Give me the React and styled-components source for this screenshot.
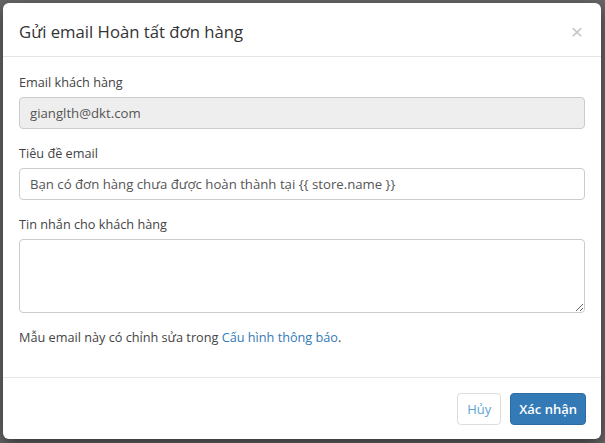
import React from "react";
import styled, { createGlobalStyle } from "styled-components";

const Global = createGlobalStyle`
  html, body { margin: 0; padding: 0; }
  body {
    background: #666;
    font-family: "Open Sans", "Liberation Sans", sans-serif;
    color: #333;
  }
  * { box-sizing: border-box; }
`;

const Backdrop = styled.div`
  width: 605px;
  height: 443px;
  padding: 3px 4px 4px 3px;
  background: #676767;
`;

const Modal = styled.div`
  width: 598px;
  height: 436px;
  background: #fff;
  border-radius: 6px;
  box-shadow: 0 5px 15px rgba(0, 0, 0, 0.5);
  display: flex;
  flex-direction: column;
`;

const Header = styled.div`
  display: flex;
  align-items: center;
  justify-content: space-between;
  height: 55px;
  padding: 3px 15px 0 16px;
  border-bottom: 1px solid #e5e5e5;
`;

const Title = styled.h4`
  margin: 0;
  font-size: 16.7px;
  font-weight: 500;
  color: #333;
`;

const Close = styled.button`
  border: 0;
  background: transparent;
  padding: 0;
  margin-right: 3px;
  font-size: 21px;
  line-height: 1;
  font-weight: 400;
  color: #c4c4c4;
  font-family: "Liberation Sans", sans-serif;
`;

const Body = styled.div`
  padding: 16px 16px 15px 16px;
  flex: 1;
`;

const Group = styled.div`
  margin-bottom: 15px;
  display: flex;
  flex-direction: column;
`;

const Label = styled.label`
  font-size: 12.7px;
  line-height: 19px;
  margin-bottom: 5px;
  color: #444;
`;

const Input = styled.input`
  height: 32px;
  width: 100%;
  padding: 0 10px;
  font-family: "Open Sans", "Liberation Sans", sans-serif;
  font-size: 13.2px;
  color: #555;
  border: 1px solid #ccc;
  border-radius: 4px;
  background: ${(p) => (p.readOnly ? "#eee" : "#fff")};
  outline: none;
`;

const TextArea = styled.textarea`
  height: 74px;
  width: 100%;
  padding: 6px 10px;
  font-family: "Open Sans", "Liberation Sans", sans-serif;
  font-size: 13.2px;
  border: 1px solid #ccc;
  border-radius: 4px;
  resize: vertical;
  outline: none;
  display: block;
`;

const Note = styled.p`
  margin: 0 0 15px;
  font-size: 12.7px;
  line-height: 19px;
  color: #444;
`;

const Link = styled.a`
  color: #337ab7;
  text-decoration: none;
`;

const Footer = styled.div`
  border-top: 1px solid #e5e5e5;
  padding: 15px 15px 14px;
  display: flex;
  justify-content: flex-end;
  gap: 9px;
`;

const Button = styled.button`
  height: 32px;
  padding: 0 ${(p) => (p.primary ? "8px" : "9px")};
  border-radius: 4px;
  font-family: "Open Sans", "Liberation Sans", sans-serif;
  font-size: 13px;
  font-weight: ${(p) => (p.primary ? 600 : 400)};
  border: 1px solid ${(p) => (p.primary ? "#2e6da4" : "#ddd")};
  background: ${(p) => (p.primary ? "#337ab7" : "#fff")};
  color: ${(p) => (p.primary ? "#fff" : "#5ea3d6")};
`;

export default function App() {
  return (
    <>
      <Global />
      <Backdrop>
        <Modal>
          <Header>
            <Title>Gửi email Hoàn tất đơn hàng</Title>
            <Close>×</Close>
          </Header>
          <Body>
            <Group>
              <Label>Email khách hàng</Label>
              <Input readOnly defaultValue="gianglth@dkt.com" />
            </Group>
            <Group>
              <Label>Tiêu đề email</Label>
              <Input defaultValue="Bạn có đơn hàng chưa được hoàn thành tại {{ store.name }}" />
            </Group>
            <Group>
              <Label>Tin nhắn cho khách hàng</Label>
              <TextArea />
            </Group>
            <Note>
              Mẫu email này có chỉnh sửa trong <Link href="#">Cấu hình thông báo</Link>.
            </Note>
          </Body>
          <Footer>
            <Button>Hủy</Button>
            <Button primary>Xác nhận</Button>
          </Footer>
        </Modal>
      </Backdrop>
    </>
  );
}
